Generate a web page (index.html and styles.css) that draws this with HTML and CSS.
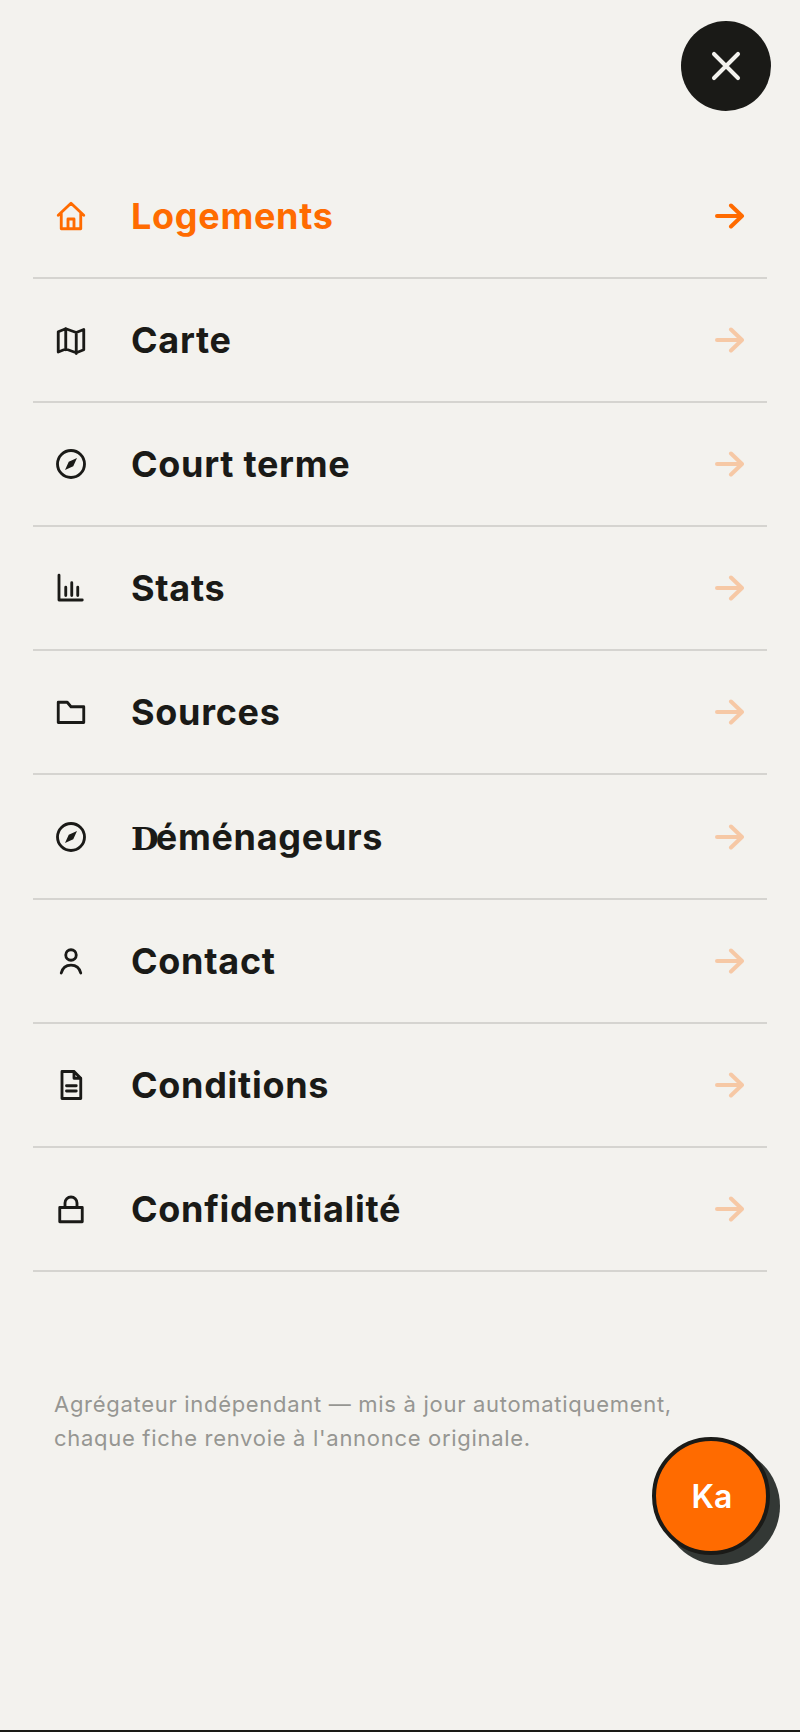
FILE: index.html
```html
<!DOCTYPE html>
<html lang="fr">
<head>
    <meta charset="UTF-8">
    <meta name="viewport" content="width=device-width, initial-scale=1.0">
    <title>Menu</title>
    <link rel="stylesheet" href="styles.css">
</head>
<body>
    <div class="page">
        <button class="btn-close" aria-label="Fermer">
            <svg viewBox="0 0 24 24"><path d="M4 4l16 16M20 4L4 20"/></svg>
        </button>

        <nav class="menu">
            <a href="#" class="menu-item active">
                <svg class="menu-icon" viewBox="0 0 24 24"><path d="M3.500 11.500L12 3.500l8.500 8M5.500 10v10.500h13V10M10 20.500v-6.500h4v6.500"/></svg>
                <span class="menu-label">Logements</span>
                <svg class="menu-arrow" viewBox="0 0 30 26"><path d="M2 13h25M16 2.500L27 13 16 23.500"/></svg>
            </a>
            <a href="#" class="menu-item">
                <svg class="menu-icon" viewBox="0 0 24 24"><path d="M3.500 6.500L8.500 4.500l7 2.500 5-2v13.500l-5 2-7-2.500-5 2zM8.500 4.500v14M15.500 7v14"/></svg>
                <span class="menu-label">Carte</span>
                <svg class="menu-arrow" viewBox="0 0 30 26"><path d="M2 13h25M16 2.500L27 13 16 23.500"/></svg>
            </a>
            <a href="#" class="menu-item">
                <svg class="menu-icon" viewBox="0 0 24 24"><circle cx="12" cy="12" r="9"/><path class="fill" d="M16 8L13.500 13.500 8 16 10.500 10.500z"/></svg>
                <span class="menu-label">Court terme</span>
                <svg class="menu-arrow" viewBox="0 0 30 26"><path d="M2 13h25M16 2.500L27 13 16 23.500"/></svg>
            </a>
            <a href="#" class="menu-item">
                <svg class="menu-icon" viewBox="0 0 24 24"><path d="M4 3.500V20h15.500M8.500 11.500V17M12.500 8.500V17M16.500 11.500V17"/></svg>
                <span class="menu-label">Stats</span>
                <svg class="menu-arrow" viewBox="0 0 30 26"><path d="M2 13h25M16 2.500L27 13 16 23.500"/></svg>
            </a>
            <a href="#" class="menu-item">
                <svg class="menu-icon" viewBox="0 0 24 24"><path d="M3.500 5.500h6l2.500 3h8.500V19h-17z"/></svg>
                <span class="menu-label">Sources</span>
                <svg class="menu-arrow" viewBox="0 0 30 26"><path d="M2 13h25M16 2.500L27 13 16 23.500"/></svg>
            </a>
            <a href="#" class="menu-item">
                <svg class="menu-icon" viewBox="0 0 24 24"><circle cx="12" cy="12" r="9"/><path class="fill" d="M16 8L13.500 13.500 8 16 10.500 10.500z"/></svg>
                <span class="menu-label"><span class="slab">D</span>éménageurs</span>
                <svg class="menu-arrow" viewBox="0 0 30 26"><path d="M2 13h25M16 2.500L27 13 16 23.500"/></svg>
            </a>
            <a href="#" class="menu-item">
                <svg class="menu-icon" viewBox="0 0 24 24"><circle cx="12" cy="8" r="3.500"/><path d="M5.500 20c.8-3.300 3.300-5.300 6.500-5.300s5.700 2 6.500 5.300"/></svg>
                <span class="menu-label">Contact</span>
                <svg class="menu-arrow" viewBox="0 0 30 26"><path d="M2 13h25M16 2.500L27 13 16 23.500"/></svg>
            </a>
            <a href="#" class="menu-item">
                <svg class="menu-icon" viewBox="0 0 24 24"><path d="M6 3h8l4.500 4.500V21H6zM14 3v4.500h4.500M9 12.500h6.500M9 16h6.500"/></svg>
                <span class="menu-label">Conditions</span>
                <svg class="menu-arrow" viewBox="0 0 30 26"><path d="M2 13h25M16 2.500L27 13 16 23.500"/></svg>
            </a>
            <a href="#" class="menu-item">
                <svg class="menu-icon" viewBox="0 0 24 24"><path d="M4.500 11h15v9.500h-15zM8 11V8a4 4 0 0 1 8 0v3"/></svg>
                <span class="menu-label">Confidentialité</span>
                <svg class="menu-arrow" viewBox="0 0 30 26"><path d="M2 13h25M16 2.500L27 13 16 23.500"/></svg>
            </a>
        </nav>

        <p class="note">Agrégateur indépendant — mis à jour automatiquement,<br>chaque fiche renvoie à l'annonce originale.</p>

        <button class="btn-avatar">Ka</button>
    </div>
</body>
</html>
```

FILE: styles.css
```css
* {
    margin: 0;
    padding: 0;
    box-sizing: border-box;
}

body {
    font-family: 'Inter', sans-serif;
    background-color: #f3f2ee;
    color: #1a1a17;
}

.page {
    position: relative;
    height: 1732px;
    padding: 155px 33px 0;
    border-bottom: 2px solid #1a1a17;
}

.btn-close {
    position: absolute;
    top: 21px;
    left: 681px;
    width: 90px;
    height: 90px;
    display: flex;
    align-items: center;
    justify-content: center;
    border: none;
    border-radius: 50%;
    background-color: #1a1a17;
}

.btn-close svg {
    width: 36px;
    height: 36px;
    fill: none;
    stroke: #f3f2ee;
    stroke-width: 2.700;
    stroke-linecap: round;
}

.menu-item {
    display: flex;
    align-items: center;
    height: 124.100px;
    padding: 0 22px 0 20px;
    border-bottom: 2px solid #d5d4d0;
    color: #1a1a17;
    text-decoration: none;
}

.menu-icon {
    flex: none;
    width: 36px;
    height: 36px;
    margin-right: 42px;
    fill: none;
    stroke: currentColor;
    stroke-width: 1.900;
    stroke-linejoin: round;
    stroke-linecap: round;
}

.menu-icon .fill {
    fill: currentColor;
    stroke: none;
}

.menu-label {
    flex: 1;
    font-size: 36px;
    font-weight: 700;
    letter-spacing: 0.7px;
}

.slab {
    font-family: 'DejaVu Serif', serif;
    font-size: 32px;
    letter-spacing: -3px;
}

.menu-arrow {
    flex: none;
    width: 30px;
    height: 26px;
    fill: none;
    stroke: #ff6b00;
    stroke-width: 4;
    stroke-linecap: round;
    stroke-linejoin: round;
    opacity: 0.3;
}

.menu-item.active {
    color: #ff6b00;
}

.menu-item.active .menu-arrow {
    opacity: 1;
}

.note {
    margin: 115px 0 0 21px;
    font-size: 22px;
    line-height: 34px;
    letter-spacing: 0.7px;
    color: #969692;
}

.btn-avatar {
    position: absolute;
    top: 1437px;
    left: 652px;
    width: 118px;
    height: 118px;
    padding-top: 1px;
    padding-left: 2px;
    border: 4px solid #1a1a17;
    border-radius: 50%;
    background-color: #ff6b00;
    box-shadow: 10px 10px 0 #333835;
    color: #fff;
    font-family: 'Inter', sans-serif;
    font-size: 32px;
    font-weight: 600;
}
```
